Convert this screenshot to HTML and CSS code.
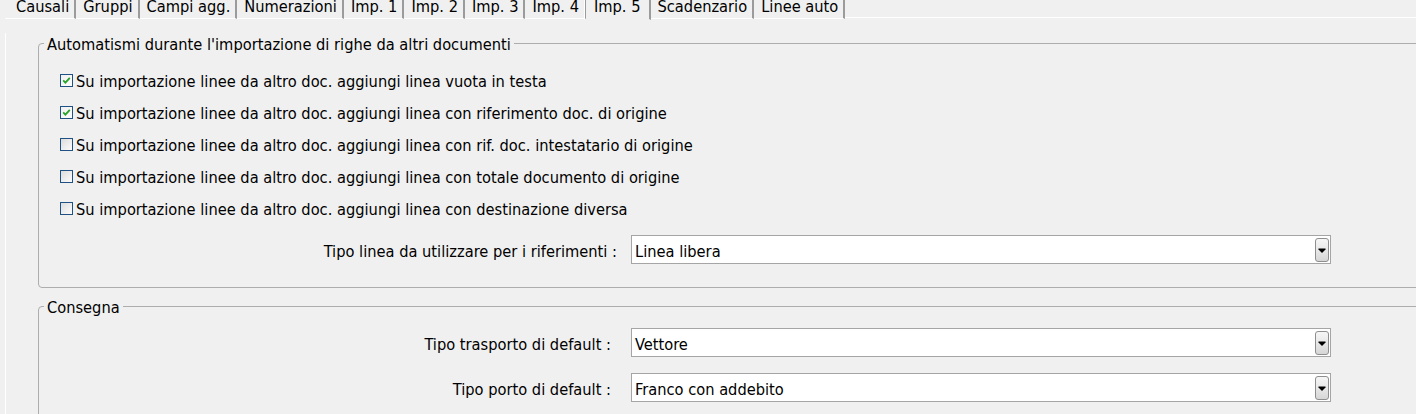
FILE: index.html
```html
<!DOCTYPE html>
<html lang="it">
<head>
<meta charset="utf-8">
<title>Imp. 5</title>
<link rel="stylesheet" href="styles.css">
</head>
<body>
<div class="tabs">
  <div class="tab tab-first">Causali</div>
  <div class="tab">Gruppi</div>
  <div class="tab">Campi agg.</div>
  <div class="tab">Numerazioni</div>
  <div class="tab">Imp. 1</div>
  <div class="tab">Imp. 2</div>
  <div class="tab">Imp. 3</div>
  <div class="tab">Imp. 4</div>
  <div class="tab tab-active">Imp. 5</div>
  <div class="tab">Scadenzario</div>
  <div class="tab">Linee auto</div>
  <div class="tab-fill"></div>
</div>
<div class="panel">
  <fieldset class="group group-auto">
    <legend>Automatismi durante l'importazione di righe da altri documenti</legend>
    <div class="check-row">
      <span class="checkbox checked"><svg viewBox="0 0 11 11" width="11" height="11"><path d="M2.2 5.4 L4.4 7.6 L8.8 2.9" fill="none" stroke="#27a327" stroke-width="1.8"/></svg></span>
      <span class="check-text">Su importazione linee da altro doc. aggiungi linea vuota in testa</span>
    </div>
    <div class="check-row">
      <span class="checkbox checked"><svg viewBox="0 0 11 11" width="11" height="11"><path d="M2.2 5.4 L4.4 7.6 L8.8 2.9" fill="none" stroke="#27a327" stroke-width="1.8"/></svg></span>
      <span class="check-text">Su importazione linee da altro doc. aggiungi linea con riferimento doc. di origine</span>
    </div>
    <div class="check-row">
      <span class="checkbox"></span>
      <span class="check-text">Su importazione linee da altro doc. aggiungi linea con rif. doc. intestatario di origine</span>
    </div>
    <div class="check-row">
      <span class="checkbox"></span>
      <span class="check-text">Su importazione linee da altro doc. aggiungi linea con totale documento di origine</span>
    </div>
    <div class="check-row">
      <span class="checkbox"></span>
      <span class="check-text">Su importazione linee da altro doc. aggiungi linea con destinazione diversa</span>
    </div>
    <div class="field-row field-row-first">
      <span class="field-label">Tipo linea da utilizzare per i riferimenti :</span>
      <div class="combo">
        <span class="combo-text">Linea libera</span>
        <span class="combo-btn"><svg viewBox="0 0 12 22" width="12" height="22"><path d="M2.5 9.5h7v1l-3.5 3.5-3.5-3.5z" fill="#000"/></svg></span>
      </div>
    </div>
  </fieldset>
  <fieldset class="group group-consegna">
    <legend>Consegna</legend>
    <div class="field-row field-row-wide">
      <span class="field-label">Tipo trasporto di default :</span>
      <div class="combo">
        <span class="combo-text">Vettore</span>
        <span class="combo-btn"><svg viewBox="0 0 12 22" width="12" height="22"><path d="M2.5 9.5h7v1l-3.5 3.5-3.5-3.5z" fill="#000"/></svg></span>
      </div>
    </div>
    <div class="field-row field-row-wide field-row-next">
      <span class="field-label">Tipo porto di default :</span>
      <div class="combo">
        <span class="combo-text">Franco con addebito</span>
        <span class="combo-btn"><svg viewBox="0 0 12 22" width="12" height="22"><path d="M2.5 9.5h7v1l-3.5 3.5-3.5-3.5z" fill="#000"/></svg></span>
      </div>
    </div>
  </fieldset>
</div>
</body>
</html>
```
FILE: styles.css
```css
html, body {
  margin: 0;
  padding: 0;
}
body {
  width: 1416px;
  height: 414px;
  overflow: hidden;
  background: #f0f0f0;
  color: #000;
  font-family: "DejaVu Sans Condensed", "DejaVu Sans", sans-serif;
  font-stretch: semi-condensed;
  font-size: 16.3px;
}

/* Tabs */
.tabs {
  display: flex;
  margin-top: -2px;
  padding-left: 5px;
  height: 20px;
  line-height: 18px;
  white-space: nowrap;
}
.tab {
  padding: 0 5px 0 7px;
  border-right: 2px solid #9b9b9b;
  border-bottom: 1px solid #fff;
  height: 20px;
}
.tab-first {
  padding-left: 11px;
}
.tab-active {
  margin-left: -2px;
  padding: 0 8px 0 9px;
  border-left: 1px solid #fff;
  border-bottom-color: #f0f0f0;
  height: 21px;
}
.tab-fill {
  flex: 1;
  border-bottom: 1px solid #fff;
}

/* Panel */
.panel {
  margin-left: 5px;
  border-left: 1px solid #fff;
  padding-left: 32px;
  height: 400px;
  width: 1500px;
}

.group {
  margin: 15px 0 0 0;
  padding: 10px 0 23px 5px;
  border: 1px solid #adadad;
  border-radius: 4px;
  width: 1420px;
  min-width: 0;
  box-sizing: border-box;
}
.group legend {
  padding: 2px 3px 0;
  line-height: 19px;
}
.group-consegna {
  margin-top: 8px;
  padding-top: 11px;
}

/* Checkbox rows */
.check-row {
  display: flex;
  align-items: center;
  gap: 3px;
  height: 32px;
  margin-left: 16px;
  white-space: nowrap;
}
.check-text {
  padding-top: 3px;
}
.checkbox {
  width: 13px;
  height: 13px;
  box-sizing: border-box;
  border: 1px solid #1f5283;
  background: linear-gradient(135deg, #dcdcdc 0%, #eeeeee 55%, #fbfbfb 100%);
  display: flex;
}
.checkbox.checked {
  background: linear-gradient(135deg, #f0f0f0 0%, #fcfcfc 100%);
}

/* Combo rows */
.field-row {
  display: grid;
  grid-template-columns: 573px 700px;
  column-gap: 14px;
  align-items: center;
}
.field-row-first {
  margin-top: 11px;
}
.field-row-wide {
  grid-template-columns: 567px 700px;
  column-gap: 20px;
}
.field-row-next {
  margin-top: 16px;
}
.field-label {
  text-align: right;
  white-space: nowrap;
  padding-top: 3px;
}
.combo {
  height: 29px;
  box-sizing: border-box;
  border: 1px solid #a5a5a5;
  background: #fff;
  display: flex;
  align-items: center;
  padding-left: 3px;
}
.combo-text {
  flex: 1;
  white-space: nowrap;
  padding-top: 3px;
}
.combo-btn {
  width: 14px;
  height: 24px;
  box-sizing: border-box;
  margin-right: 1px;
  border: 1px solid #8e8e8e;
  border-radius: 3px;
  background: linear-gradient(180deg, #f6f6f6 0%, #e8e8e8 50%, #d6d6d6 100%);
  display: flex;
}
```
